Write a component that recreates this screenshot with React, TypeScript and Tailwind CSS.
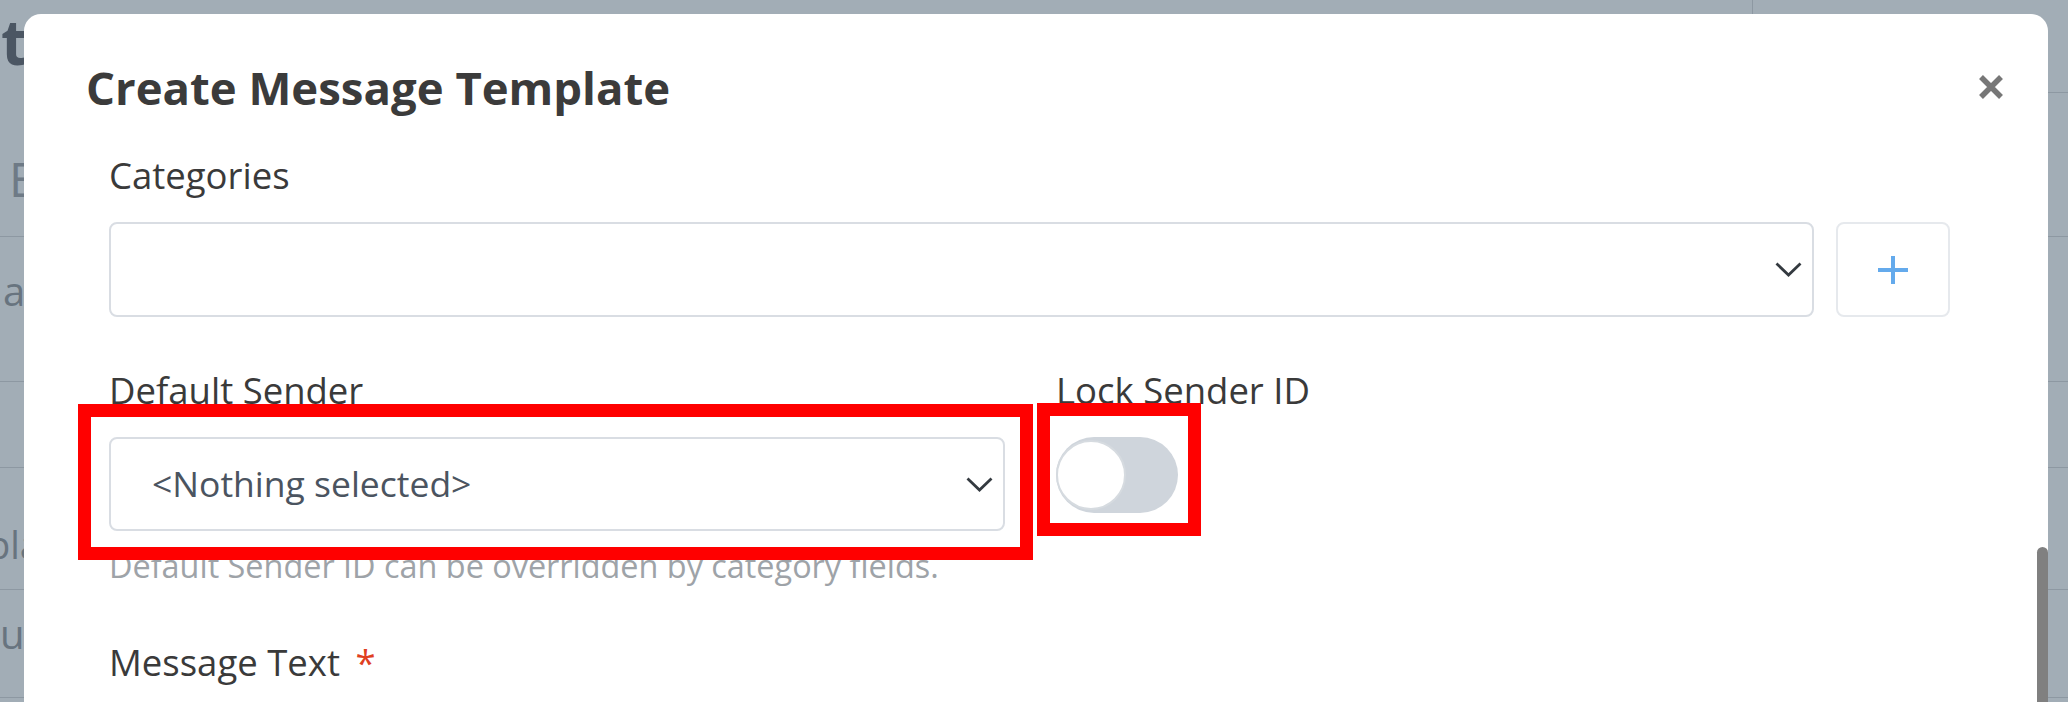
import { FC } from 'react';

const Chevron: FC = () => (
  <svg width="27" height="15" viewBox="0 0 27 15" fill="none">
    <polyline points="1.5,1.5 13.5,13 25.5,1.5" stroke="#343a40" strokeWidth="2.8" />
  </svg>
);

const Select: FC<{ text?: string; height: string }> = ({ text, height }) => (
  <div
    className={`flex w-full items-center justify-between rounded-[8px] border-2 border-[#d9dde3] bg-white pl-[41px] pr-[10px] ${height}`}
  >
    <span className="text-[35.5px] text-[#4b5460]">{text}</span>
    <Chevron />
  </div>
);

const Backdrop: FC = () => (
  <div className="flex flex-col text-[#68747f]">
    <div className="flex h-[93px]">
      <div className="w-[1752px] pl-[1px] pt-[10px] text-[62px] font-bold leading-[62px] text-[#4b5663]">
        t
      </div>
      <div className="flex-1 border-b border-l border-[#8d98a2]" />
    </div>
    <div className="h-[144px] border-b border-[#8d98a2] pl-[9px] pt-[62px] text-[48px] leading-[48px] text-[#6e7a86]">
      E
    </div>
    <div className="h-[145px] border-b border-[#8d98a2] pl-[3px] pt-[34px] text-[40px] leading-[40px]">
      a
    </div>
    <div className="h-[86px] border-b border-[#8d98a2]" />
    <div className="h-[122px] overflow-hidden border-b border-[#8d98a2] pt-[56px] text-[38px] leading-[40px]">
      <span className="-ml-[13px] block">pla</span>
    </div>
    <div className="h-[108px] border-b border-[#8d98a2] pt-[24px] text-[40px] leading-[40px]">
      u
    </div>
  </div>
);

const App: FC = () => {
  return (
    <div className="relative h-[702px] w-[2068px] overflow-hidden bg-[#a2adb6] font-['Open_Sans',sans-serif]">
      <Backdrop />
      <div className="absolute left-[24px] top-[14px] h-[760px] w-[2024px] rounded-[17px] bg-white">
        <div className="flex items-center justify-between pl-[62px] pr-[44px] pt-[43px]">
          <h2 className="text-[45.5px] font-bold leading-[60px] text-[#3b3b3b]">Create Message Template</h2>
          <button>
            <svg width="26" height="26" viewBox="0 0 26 26" fill="none">
              <path d="M3 3L23 23M23 3L3 23" stroke="#777777" strokeWidth="5.5" />
            </svg>
          </button>
        </div>

        <div className="pl-[85px] pr-[98px] pt-[34px] text-[#3a3a3a]">
          <label className="block text-[36.5px] font-medium leading-[48px]">Categories</label>
          <div className="mt-[23px] flex gap-[22px]">
            <Select height="h-[95px]" />
            <button className="flex h-[95px] w-[114px] shrink-0 items-center justify-center rounded-[8px] border-2 border-[#e6e9ed] bg-white">
              <svg width="30" height="28" viewBox="0 0 30 28" fill="none">
                <path d="M15 0V28M0 14H30" stroke="#64aaec" strokeWidth="4" />
              </svg>
            </button>
          </div>

          <div className="mt-[49px] flex gap-[51px]">
            <div className="w-[896px] shrink-0">
              <label className="block text-[36.5px] font-medium leading-[48px]">Default Sender</label>
              <div className="relative mt-[23px]">
                <Select height="h-[94px]" text="<Nothing selected>" />
                <div className="absolute -bottom-[29px] -left-[31px] -right-[28px] -top-[33px] z-10 border-[13px] border-[#ff0000]" />
              </div>
              <p className="mt-[14px] text-[32.4px] leading-[40px] text-[#9ea3a8]">
                Default Sender ID can be overridden by category fields.
              </p>
            </div>
            <div>
              <label className="block text-[36.5px] font-medium leading-[48px]">Lock Sender ID</label>
              <div className="relative mt-[23px] w-[122px]">
                <div className="flex h-[76px] w-[122px] items-center rounded-full bg-[#cfd5dc]">
                  <div className="h-[70px] w-[70px] rounded-full border-2 border-[#d6dbe0] bg-white" />
                </div>
                <div className="absolute -bottom-[23px] -left-[19px] -right-[23px] -top-[34px] z-10 border-[13px] border-[#ff0000]" />
              </div>
            </div>
          </div>

          <label className="mt-[53px] block text-[36.5px] font-medium leading-[48px]">
            Message Text <span className="ml-[6px] text-[#e0401f]">*</span>
          </label>
        </div>

        <div className="absolute right-0 top-[533px] h-[240px] w-[11px] rounded-t-full bg-[#808080]" />
      </div>
    </div>
  );
};

export default App;
